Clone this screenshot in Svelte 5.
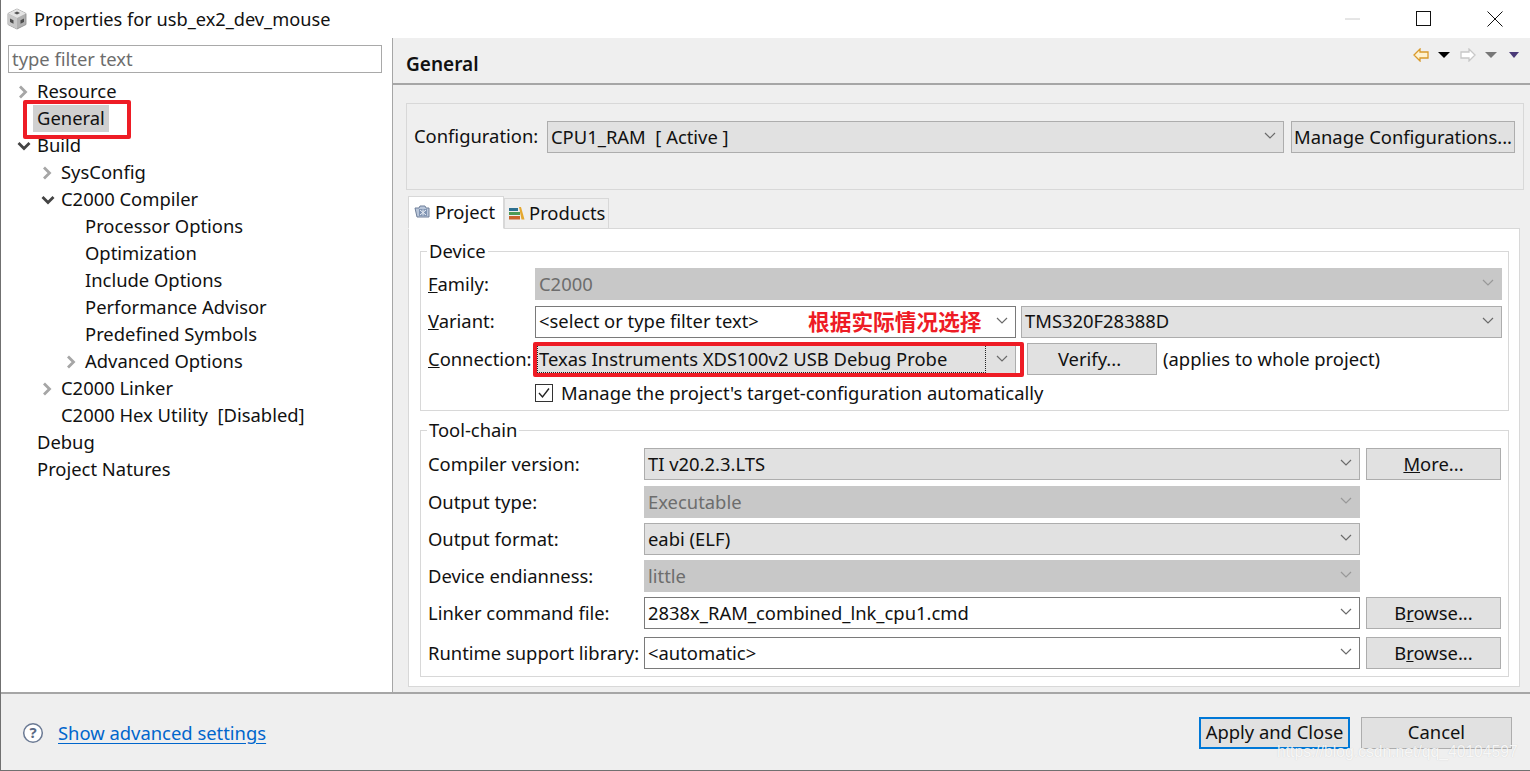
<script>
  const tree = [
    { t: 'Resource', l: 0, c: 'closed' },
    { t: 'General', l: 0, sel: true },
    { t: 'Build', l: 0, c: 'open' },
    { t: 'SysConfig', l: 1, c: 'closed' },
    { t: 'C2000 Compiler', l: 1, c: 'open' },
    { t: 'Processor Options', l: 2 },
    { t: 'Optimization', l: 2 },
    { t: 'Include Options', l: 2 },
    { t: 'Performance Advisor', l: 2 },
    { t: 'Predefined Symbols', l: 2 },
    { t: 'Advanced Options', l: 2, c: 'closed' },
    { t: 'C2000 Linker', l: 1, c: 'closed' },
    { t: 'C2000 Hex Utility  [Disabled]', l: 1 },
    { t: 'Debug', l: 0 },
    { t: 'Project Natures', l: 0 }
  ];

  const toolchain = [
    { label: 'Compiler version:', value: 'TI v20.2.3.LTS', kind: 'ro', btn: 'More' },
    { label: 'Output type:', value: 'Executable', kind: 'off' },
    { label: 'Output format:', value: 'eabi (ELF)', kind: 'ro' },
    { label: 'Device endianness:', value: 'little', kind: 'off' },
    { label: 'Linker command file:', value: '2838x_RAM_combined_lnk_cpu1.cmd', kind: 'edit', btn: 'Browse' },
    { label: 'Runtime support library:', value: '<automatic>', kind: 'edit', btn: 'Browse' }
  ];
</script>

{#snippet chevron()}
  <svg class="chev" width="14" height="8" viewBox="0 0 14 8"><path d="M2 1l5 5 5-5" fill="none" stroke="#6a6a6a" stroke-width="1.2" /></svg>
{/snippet}

{#snippet combo(value, kind)}
  <div class="combo {kind}">
    <span class="val">{value}</span>
    {@render chevron()}
  </div>
{/snippet}

{#snippet btnLabel(name)}
  {#if name === 'More'}<span><u>M</u>ore...</span>{:else}<span>B<u>r</u>owse...</span>{/if}
{/snippet}

<div class="window">
  <header class="titlebar">
    <svg class="appicon" width="22" height="22" viewBox="0 0 22 22">
      <path d="M11 1l9 4.500v11L11 21l-9-4.500v-11z" fill="#b0b0b0" stroke="#8a8a8a" stroke-width=".8" />
      <path d="M11 1l9 4.500-9 4.500-9-4.500z" fill="#e4e4e4" />
      <path d="M11 10v11l-9-4.500v-11z" fill="#c8c8c8" />
      <path d="M8 5l3-1.500L14 5l-3 1.500z" fill="#555" />
      <path d="M4 10.500l3.500 1.700v3.600L4 14zM14.500 12.200l3.500-1.700V14l-3.500 1.800z" fill="#4e4e4e" />
    </svg>
    <span class="title">Properties for usb_ex2_dev_mouse</span>
    <div class="winbtns">
      <svg width="16" height="16" viewBox="0 0 16 16"><path d="M0 8h15" stroke="#ccc" /></svg>
      <svg width="16" height="16" viewBox="0 0 16 16"><rect x=".5" y=".5" width="14" height="14" fill="none" stroke="#111" /></svg>
      <svg width="16" height="16" viewBox="0 0 16 16"><path d="M.5.5l15 15M15.500.5l-15 15" stroke="#111" /></svg>
    </div>
  </header>

  <div class="main">
    <aside class="side">
      <div class="filter">type filter text</div>
      <div class="tree">
        {#each tree as n}
          <div class="row l{n.l}">
            <span class="tw">
              {#if n.c === 'closed'}
                <svg width="12" height="14" viewBox="0 0 12 14"><path d="M3 1.500L8.500 7 3 12.500" fill="none" stroke="#a6a6a6" stroke-width="2.800" /></svg>
              {:else if n.c === 'open'}
                <svg width="14" height="12" viewBox="0 0 14 12"><path d="M1.500 3L7 8.500 12.500 3" fill="none" stroke="#444" stroke-width="2.800" /></svg>
              {/if}
            </span>
            <span class="txt" class:sel={n.sel}>{n.t}</span>
          </div>
        {/each}
      </div>
      <div class="redbox r-general"></div>
    </aside>

    <section class="content">
      <div class="head">
        <h1>General</h1>
        <div class="tools">
          <svg width="16" height="14" viewBox="0 0 16 14"><path d="M1 7l6-6v3h8v6H7v3z" fill="#fff2cf" stroke="#d99a2b" stroke-width="1.300" /></svg>
          <span class="tri black"></span>
          <svg class="fwd" width="16" height="14" viewBox="0 0 16 14"><path d="M15 7L9 1v3H1v6h8v3z" fill="#fff" stroke="#c8c8c8" stroke-width="1.300" /></svg>
          <span class="tri gray"></span>
          <span class="tri purple"></span>
        </div>
      </div>

      <div class="config">
        <span class="cfg-label">Configuration:</span>
        {@render combo('CPU1_RAM  [ Active ]', 'ro grow')}
        <div class="btn manage">Manage Configurations...</div>
      </div>

      <div class="tabs">
        <div class="tab active">
          <svg width="16" height="16" viewBox="0 0 16 16">
            <path d="M1 5h4l1-2h5l1 2h3v9H3z" fill="#b9c6da" stroke="#6f7f99" />
            <path d="M5 6h8v7H5z" fill="#7f93b2" />
            <path d="M6 7l6 5M12 7l-6 5M9 6.500v6" stroke="#e8edf4" />
          </svg>
          <span>Project</span>
        </div>
        <div class="tab">
          <svg width="18" height="16" viewBox="0 0 18 16">
            <rect x="1" y="3" width="9" height="3" fill="#2c6f8f" />
            <rect x="1" y="7" width="11" height="3" fill="#4d9a55" />
            <rect x="1" y="11" width="11" height="3.500" fill="#c9642c" />
            <path d="M11 2h2l3.500 12.500h-3z" fill="#e5a82f" />
          </svg>
          <span>Products</span>
        </div>
      </div>

      <div class="panel">
        <div class="group device">
          <span class="legend">Device</span>
          <div class="frow">
            <span class="lab dev"><u>F</u>amily:</span>
            {@render combo('C2000', 'off grow')}
          </div>
          <div class="frow">
            <span class="lab dev"><u>V</u>ariant:</span>
            <div class="half">{@render combo('<select or type filter text>', 'edit grow')}</div>
            <div class="tms">{@render combo('TMS320F28388D', 'ro grow')}</div>
            <span class="note">根据实际情况选择</span>
          </div>
          <div class="frow conn">
            <span class="lab dev"><u>C</u>onnection:</span>
            <div class="half">
              <div class="combo ro grow focus">
                <span class="val"><span class="dots">Texas Instruments XDS100v2 USB Debug Probe</span></span>
                {@render chevron()}
              </div>
            </div>
            <div class="btn verify">Verify...</div>
            <span class="applies">(applies to whole project)</span>
            <div class="redbox r-conn"></div>
          </div>
          <div class="frow check">
            <span class="lab dev"></span>
            <span class="box">
              <svg width="14" height="14" viewBox="0 0 14 14"><path d="M2 7l3.500 4L12 2.500" fill="none" stroke="#222" stroke-width="1.400" /></svg>
            </span>
            <span>Manage the project's target-configuration automatically</span>
          </div>
        </div>

        <div class="group chain">
          <span class="legend">Tool-chain</span>
          {#each toolchain as r}
            <div class="frow">
              <span class="lab tc">{r.label}</span>
              {@render combo(r.value, r.kind + ' wide')}
              {#if r.btn}
                <div class="btn side-btn">{@render btnLabel(r.btn)}</div>
              {/if}
            </div>
          {/each}
        </div>
      </div>
    </section>
  </div>

  <footer class="foot">
    <svg width="22" height="22" viewBox="0 0 22 22">
      <circle cx="11" cy="11" r="9.300" fill="#fff" stroke="#6b7a94" stroke-width="1.500" />
      <text x="11" y="16" text-anchor="middle" class="q">?</text>
    </svg>
    <a href="#advanced" class="link">Show advanced settings</a>
    <div class="foot-btns">
      <div class="btn apply">Apply and Close</div>
      <div class="btn cancel">Cancel</div>
    </div>
  </footer>

  <span class="wm">https://blog.csdn.net/qq_40104597</span>
</div>

<style>
  :global(body) {
    margin: 0;
    background: #efefef;
  }

  .window {
    position: relative;
    width: 1530px;
    height: 771px;
    box-sizing: border-box;
    display: flex;
    flex-direction: column;
    overflow: hidden;
    border-left: 1px solid #707070;
    border-bottom: 1px solid #707070;
    font-family: "Noto Sans", sans-serif;
    font-size: 18.4px;
    color: #111;
    background: #efefef;
  }

  .titlebar {
    height: 38px;
    flex: none;
    display: flex;
    align-items: center;
    background: #fff;
    padding-left: 5px;
    gap: 6px;
  }
  .title { font-size: 18.2px; }
  .winbtns {
    margin-left: auto;
    display: flex;
    gap: 55px;
    margin-right: 27px;
  }

  .main {
    flex: 1;
    display: flex;
    min-height: 0;
    border-bottom: 2px solid #a6a6a6;
  }

  .side {
    position: relative;
    flex: none;
    background: #fff;
    border-right: 1px solid #a6a6a6;
    padding: 7px 10px 0 7px;
    width: 374px;
  }

  .filter {
    height: 28px;
    box-sizing: border-box;
    border: 1px solid #a9a9a9;
    padding-left: 3px;
    line-height: 26px;
    color: #6d6d6d;
  }

  .tree { margin-left: -7px; padding-top: 5px; }
  .row {
    height: 27px;
    display: flex;
    align-items: center;
  }
  .row.l0 { padding-left: 18px; }
  .row.l1 { padding-left: 42px; }
  .row.l2 { padding-left: 66px; }
  .tw {
    width: 18px;
    flex: none;
    display: flex;
    align-items: center;
    justify-content: flex-start;
  }
  .tw svg { margin-left: -2px; }
  .txt { white-space: pre; margin-bottom: 2px; }
  .txt.sel {
    background: #d0d0d0;
    margin-left: -4px;
    margin-bottom: 0;
    padding: 0 4px;
    height: 27px;
    line-height: 26px;
  }

  .redbox {
    position: absolute;
    box-sizing: border-box;
    border: 4px solid #ee1c25;
    border-radius: 2px;
    pointer-events: none;
  }
  .r-general {
    left: 22px;
    top: 62px;
    width: 108px;
    height: 39px;
  }

  .content {
    flex: 1;
    min-width: 0;
    padding: 0 6px 0 13px;
  }

  .head {
    height: 45px;
    margin: 0 -6px 18px -13px;
    padding: 0 13px;
    border-bottom: 2px solid #a6a6a6;
    display: flex;
    align-items: center;
  }
  h1 {
    margin: 0;
    padding-top: 7px;
    font-size: 19px;
    font-weight: 600;
  }
  .tools {
    margin-left: auto;
    display: flex;
    align-items: center;
    margin-top: -12px;
    margin-right: -2px;
  }
  .tri {
    width: 0;
    height: 0;
    border-left: 6px solid transparent;
    border-right: 6px solid transparent;
    border-top: 6px solid #000;
    margin-left: 9px;
  }
  .tri.gray { border-top-color: #777; margin-left: 9px; }
  .tri.purple { border-top-color: #4a3a78; border-left-width: 5px; border-right-width: 5px; margin-left: 12px; }
  .fwd { margin-left: 10px; }

  .config {
    border: 1px solid #d8d8d8;
    display: flex;
    align-items: flex-start;
    padding: 17px 8px 0 7px;
    height: 68px;
    gap: 7px;
  }
  .cfg-label { line-height: 30px; width: 126px; flex: none; }

  .combo {
    height: 32px;
    box-sizing: border-box;
    border: 1px solid #adadad;
    display: flex;
    align-items: center;
    padding: 0 0 2px 3px;
    background: #e1e1e1;
    min-width: 0;
  }
  .combo.grow { flex: 1; }
  .combo.wide { width: 716px; flex: none; }
  .combo.off { background: #c8c8c8; color: #6d6d6d; border-color: #c8c8c8; }
  .combo.edit { background: #fff; border-color: #7a7a7a; }
  .val { flex: 1; min-width: 0; white-space: pre; }
  .chev { margin-right: 6px; flex: none; }
  .combo.off .chev { opacity: .5; }

  .focus { padding: 0 0 0 3px; }
  .dots {
    outline: 1px dotted #222;
    display: block;
    margin: 0 0 0 -1px;
    padding-left: 1px;
    line-height: 26px;
    height: 26px;
    width: 446px;
    overflow: hidden;
  }
  .focus .chev { margin-right: 6px; margin-left: 8px; }

  .btn {
    height: 32px;
    box-sizing: border-box;
    border: 1px solid #adadad;
    background: #e1e1e1;
    display: flex;
    align-items: center;
    justify-content: center;
    flex: none;
    padding-bottom: 2px;
  }
  .manage { width: 224px; }

  .tabs {
    margin: 6px 0 0 2px;
    height: 33px;
    display: flex;
    align-items: flex-end;
    position: relative;
    z-index: 1;
  }
  .tab {
    display: flex;
    align-items: center;
    gap: 3px;
    height: 30px;
    box-sizing: border-box;
    border: 1px solid #d8d8d8;
    border-bottom: none;
    padding: 0 3px 2px;
    margin-bottom: 1px;
  }
  .tab.active {
    height: 33px;
    background: #fff;
    width: 96px;
    margin-bottom: 0;
    border-bottom: 1px solid #fff;
    gap: 5px;
    padding: 0 5px 3px;
  }

  .panel {
    background: #fff;
    margin: -1px 4px 0 2px;
    border: 1px solid #d8d8d8;
    padding: 22px 10px 0 11px;
    height: 435px;
  }

  .group {
    position: relative;
    border: 1px solid #d8d8d8;
    padding: 16px 6px 0 7px;
    box-sizing: border-box;
    display: flex;
    flex-direction: column;
  }
  .device { height: 160px; gap: 5.500px; }
  .chain { height: 247px; margin-top: 19px; padding-top: 17px; gap: 5px; }
  .chain .frow:nth-child(3) { margin-top: 1px; }
  .chain .frow:last-child { margin-top: 3px; }
  .legend {
    position: absolute;
    left: 6px;
    top: -14px;
    padding: 0 2px;
    background: #fff;
    line-height: 26px;
  }

  .frow {
    display: flex;
    align-items: center;
    height: 32px;
    position: relative;
    flex: none;
  }
  .lab { flex: none; padding-bottom: 2px; }
  .lab.dev { width: 107px; }
  .lab.tc { width: 216px; }
  .half { width: 481px; flex: none; display: flex; }
  .tms { flex: 1; display: flex; margin-left: 5px; }

  .note {
    position: absolute;
    left: 380px;
    top: 0;
    color: #ee1c25;
    font-family: "Noto Sans CJK SC", sans-serif;
    font-weight: 700;
    font-size: 21.700px;
    line-height: 30px;
  }

  .verify { width: 130px; margin-left: 11px; padding-right: 5px; }
  .applies { margin-left: 6px; padding-bottom: 2px; }
  .r-conn {
    left: 105px;
    top: -1px;
    width: 491px;
    height: 35px;
  }

  .check { height: 22px; margin-top: 1px; }
  .box {
    width: 18px;
    height: 18px;
    box-sizing: border-box;
    border: 1px solid #333;
    background: #fff;
    display: flex;
    align-items: center;
    justify-content: center;
    margin-right: 8px;
  }

  .side-btn { width: 135px; margin-left: 6px; }

  .foot {
    height: 76px;
    flex: none;
    display: flex;
    align-items: center;
    padding-left: 21px;
    box-sizing: border-box;
    padding-top: 1px;
  }
  .q {
    font-family: "Noto Sans", sans-serif;
    font-size: 15px;
    font-weight: 700;
    fill: #5a6a85;
  }
  .link {
    margin-left: 14px;
    color: #0066cc;
    text-decoration: underline;
    text-underline-offset: 3px;
  }
  .foot-btns {
    margin-left: auto;
    display: flex;
    gap: 11px;
    margin-right: 18px;
  }
  .apply { width: 151px; border: 2px solid #0078d7; }
  .cancel { width: 151px; }

  .wm {
    position: absolute;
    left: 1276px;
    top: 743px;
    font-family: "Liberation Sans", sans-serif;
    font-size: 15.700px;
    color: rgba(255, 255, 255, .85);
    text-shadow: 0 0 1px rgba(120, 120, 120, .3);
    pointer-events: none;
  }
</style>
